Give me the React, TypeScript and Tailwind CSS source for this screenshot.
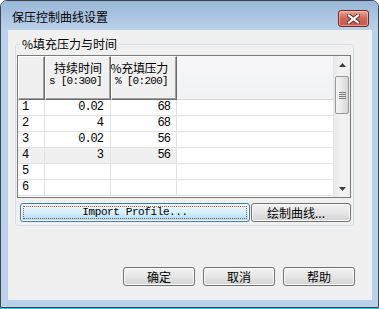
import React from "react";

const rows: [string, string, string][] = [
  ["1", "0.02", "68"],
  ["2", "4", "68"],
  ["3", "0.02", "56"],
  ["4", "3", "56"],
  ["5", "", ""],
  ["6", "", ""],
];

function WinButton({ label, className = "" }: { label: string; className?: string }) {
  return (
    <div
      className={`h-[19px] rounded-[3px] border border-[#707070] bg-gradient-to-b from-[#f2f2f2] via-[#e6e6e6] to-[#d2d2d2] shadow-[inset_0_0_0_1px_#fcfcfc] flex items-center justify-center text-[12px] leading-[14px] whitespace-nowrap ${className}`}
    >
      {label}
    </div>
  );
}

export default function App() {
  return (
    <div className="w-[379px] h-[309px] bg-white font-['Noto_Sans_CJK_SC',sans-serif] text-[12px] text-black">
      <div className="w-[379px] h-[308px] flex flex-col rounded-t-[7px] border border-[#3c4653] bg-[#b9d1ea] overflow-hidden">
        {/* Title bar */}
        <div className="h-[29px] shrink-0 flex items-start bg-gradient-to-b from-[#9ab7d7] to-[#bad1ea] pl-[11px] pr-[9px]">
          <span className="mt-[9px] leading-[14px] text-[12px] text-black">保压控制曲线设置</span>
          <div className="ml-auto mt-[9px] w-[31px] h-[17px] rounded-[3px] border border-[#6e2a22] bg-gradient-to-b from-[#e8a698] via-[#d06556] to-[#c9584a] shadow-[inset_0_0_0_1px_rgba(255,220,210,0.5)] flex items-center justify-center">
            <svg width="13" height="10" viewBox="0 0 13 10">
              <path d="M2 1.5 L11 8.5 M11 1.5 L2 8.5" stroke="#5a2a24" strokeWidth="4" strokeLinecap="square" />
              <path d="M2 1.5 L11 8.5 M11 1.5 L2 8.5" stroke="#ffffff" strokeWidth="2.2" strokeLinecap="square" />
            </svg>
          </div>
        </div>

        {/* Client area */}
        <div className="ml-[7px] mr-[6px] h-[270px] shrink-0 bg-[#f0f0f0] flex flex-col">
          <fieldset className="mt-[7px] ml-[7px] w-[339px] border border-[#d5dfe5] rounded-[3px] pb-[3px]">
            <legend className="ml-[4px] px-[2px] leading-[14px] text-[12px]">%填充压力与时间</legend>
            {/* Grid */}
            <div className="mt-[4px] ml-[1px] w-[334px] h-[143px] border border-[#7a7a7a] bg-white flex">
              <div className="w-[315px] flex flex-col">
                {/* Header */}
                <div className="h-[44px] flex">
                  <div className="w-[27px] h-[44px] bg-[#f0f0f0] border-t border-l border-white border-r border-b border-r-[#696969] border-b-[#696969] shadow-[inset_-1px_-1px_0_#a0a0a0]" />
                  <div className="w-[66px] h-[44px] bg-[#f0f0f0] border-t border-l border-white border-r border-b border-r-[#696969] border-b-[#696969] shadow-[inset_-1px_-1px_0_#a0a0a0] flex flex-col items-end pr-[8px] pt-[4px] whitespace-nowrap">
                    <span className="leading-[14px] text-[12px]">持续时间</span>
                    <span className="leading-[12px] text-[11px] tracking-[-0.7px] font-['Liberation_Mono',monospace]">s [0:300]</span>
                  </div>
                  <div className="w-[66px] h-[44px] bg-[#f0f0f0] border-t border-l border-white border-r border-b border-r-[#696969] border-b-[#696969] shadow-[inset_-1px_-1px_0_#a0a0a0] flex flex-col items-end pr-[8px] pt-[4px] whitespace-nowrap">
                    <span className="leading-[14px] text-[12px] tracking-[-0.3px]">%充填压力</span>
                    <span className="leading-[12px] text-[11px] tracking-[-0.7px] font-['Liberation_Mono',monospace]">% [0:200]</span>
                  </div>
                  <div className="flex-1 h-[44px] bg-gradient-to-b from-[#f7f7f9] to-[#f1f2f4] border-b border-[#d8d8d8]" />
                </div>
                {/* Rows */}
                {rows.map((r, i) => {
                  const hl = i === 3 ? "bg-[#f0f0f0]" : "bg-white";
                  return (
                    <div key={i} className="h-[16px] flex font-['Liberation_Mono',monospace] text-[12px] tracking-[-1px] leading-[15px]">
                      <div className={`w-[27px] h-[16px] border-r border-b border-[#e2e2e2] pl-[4px] ${hl}`}>{r[0]}</div>
                      <div className={`w-[66px] h-[16px] border-r border-b border-[#e2e2e2] pr-[7px] text-right ${hl}`}>{r[1]}</div>
                      <div className={`w-[66px] h-[16px] border-r border-b border-[#e2e2e2] pr-[6px] text-right ${hl}`}>{r[2]}</div>
                      <div className="flex-1 h-[16px] border-b border-[#e2e2e2]" />
                    </div>
                  );
                })}
              </div>
              {/* Scrollbar */}
              <div className="w-[17px] flex flex-col bg-gradient-to-r from-[#e9e9e9] via-[#f3f3f3] to-[#eeeeee] border-l border-[#e6e6e6]">
                <div className="h-[17px] flex items-center justify-center">
                  <svg width="7" height="4" viewBox="0 0 7 4">
                    <path d="M3.5 0 L7 4 L0 4 Z" fill="#3c3c3c" />
                  </svg>
                </div>
                <div className="mt-[3px] mx-[1px] h-[38px] rounded-[2px] border border-[#979797] bg-gradient-to-r from-[#f4f4f4] via-[#e8e8e8] to-[#d6d6d6] flex flex-col items-center justify-center gap-[1px]">
                  <div className="w-[7px] h-[1px] bg-[#7c7c7c]" />
                  <div className="w-[7px] h-[1px] bg-[#7c7c7c]" />
                  <div className="w-[7px] h-[1px] bg-[#7c7c7c]" />
                  <div className="w-[7px] h-[1px] bg-[#7c7c7c]" />
                </div>
                <div className="flex-1" />
                <div className="h-[17px] flex items-center justify-center">
                  <svg width="7" height="4" viewBox="0 0 7 4">
                    <path d="M0 0 L7 0 L3.5 4 Z" fill="#3c3c3c" />
                  </svg>
                </div>
              </div>
            </div>
            {/* Buttons inside group */}
            <div className="mt-[5px] ml-[4px] flex gap-[1px]">
              <div className="w-[230px] h-[19px] rounded-[3px] border border-[#3c7fb1] bg-gradient-to-b from-[#eaf6fd] via-[#d9f0fc] to-[#a7d9f5] shadow-[inset_0_0_0_1px_#f4fbff] p-[2px]">
                <div className="w-full h-full border border-dotted border-[#b24a3a] flex items-center justify-center font-['Liberation_Mono',monospace] text-[11px] tracking-[-0.4px] leading-[13px] whitespace-nowrap">
                  Import Profile...
                </div>
              </div>
              <WinButton label="绘制曲线..." className="w-[100px] pr-[10px]" />
            </div>
          </fieldset>

          {/* Bottom buttons */}
          <div className="mt-auto mb-[14px] flex justify-end gap-[8px] pr-[17px]">
            <WinButton label="确定" className="w-[72px]" />
            <WinButton label="取消" className="w-[72px]" />
            <WinButton label="帮助" className="w-[72px]" />
          </div>
        </div>
      </div>
      <div className="h-[1px] bg-[#2ec4d8]" />
    </div>
  );
}
